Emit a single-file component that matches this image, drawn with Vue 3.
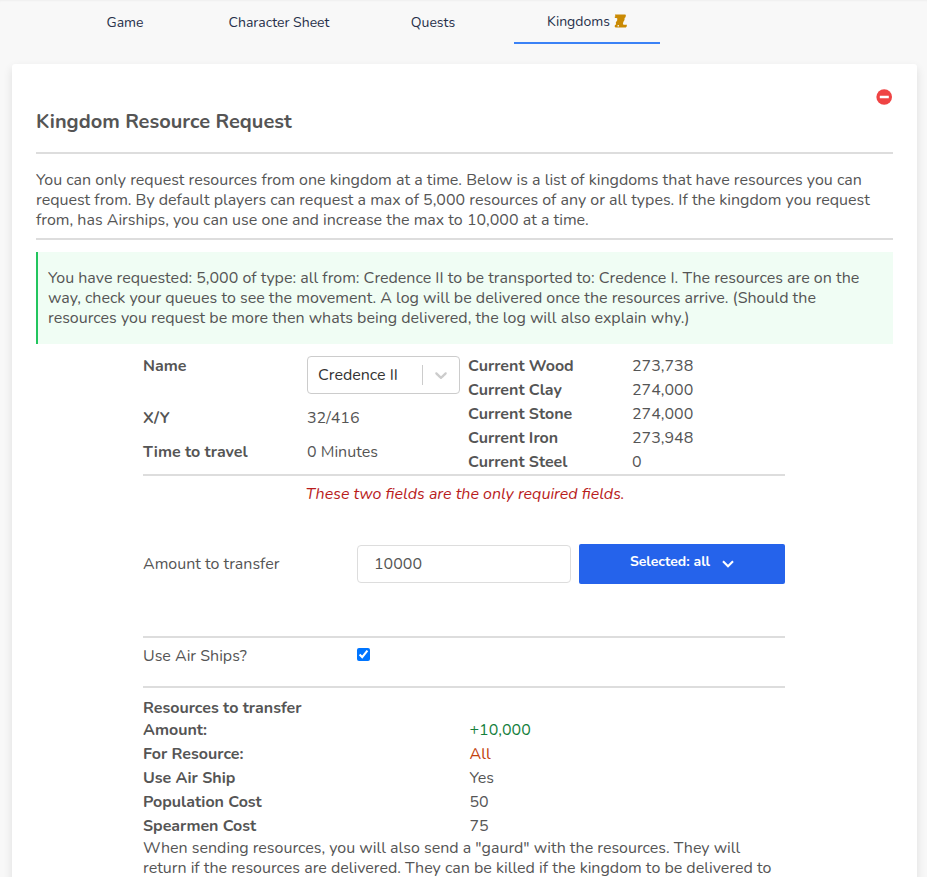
<script setup>
import { ref } from 'vue'

const tabs = [
  { name: 'Game' },
  { name: 'Character Sheet' },
  { name: 'Quests' },
  { name: 'Kingdoms', active: true },
]
const intro = [
  'You can only request resources from one kingdom at a time. Below is a list of kingdoms that have resources you can',
  'request from. By default players can request a max of 5,000 resources of any or all types. If the kingdom you request',
  'from, has Airships, you can use one and increase the max to 10,000 at a time.',
]
const notice = [
  'You have requested: 5,000 of type: all from: Credence II to be transported to: Credence I. The resources are on the',
  'way, check your queues to see the movement. A log will be delivered once the resources arrive. (Should the',
  'resources you request be more then whats being delivered, the log will also explain why.)',
]
const stock = [
  ['Current Wood', '273,738'],
  ['Current Clay', '274,000'],
  ['Current Stone', '274,000'],
  ['Current Iron', '273,948'],
  ['Current Steel', '0'],
]
const summary = [
  ['Amount:', '+10,000', 'green'],
  ['For Resource:', 'All', 'orange'],
  ['Use Air Ship', 'Yes', ''],
  ['Population Cost', '50', ''],
  ['Spearmen Cost', '75', ''],
]
const footer = [
  'When sending resources, you will also send a "gaurd" with the resources. They will',
  'return if the resources are delivered. They can be killed if the kingdom to be delivered to',
]
const amount = ref('10000')
const airship = ref(true)
</script>

<template>
  <div class="page">
    <nav class="tabs">
      <a v-for="t in tabs" :key="t.name" class="tab" :class="{ active: t.active }">
        <span>{{ t.name }}</span>
        <svg v-if="t.active" class="scroll" viewBox="0 0 13 14">
          <path d="M.9.4H11.400L11.900 1.500 11.500 3.200 10.600 4 10.500 6 9.300 8 8.900 10.100 9.600 10.800H12.900L12.700 12.600 11.800 13.600H1.600L.7 12.700.9 10.900 2.100 10.500 1.800 8.500 3.200 6.200 3.300 4.600 2.500 3.900 1.200 4 .5 3.100 1.400 2.300z" />
          <path d="M3.600 10.900v1.500h1.300v-1.500z" fill="#f8f8f8" />
        </svg>
      </a>
    </nav>

    <main class="card">
      <button class="close" aria-label="Close">
        <svg viewBox="0 0 16 16"><circle cx="8.200" cy="8" r="7.800" fill="#ef4444" /><rect x="3.800" y="6.800" width="9" height="2.500" rx=".2" fill="#fff" /></svg>
      </button>
      <h3>Kingdom Resource Request</h3>
      <hr class="rule" />
      <p class="copy intro"><span v-for="l in intro" :key="l">{{ l }}</span></p>
      <hr class="rule" />
      <div class="alert"><p class="copy"><span v-for="l in notice" :key="l">{{ l }}</span></p></div>

      <section class="body">
        <div class="details">
          <dl class="kingdom">
            <dt>Name</dt>
            <dd class="pick">
              <div class="select">
                <span class="value">Credence II</span>
                <span class="sep"></span>
                <svg viewBox="0 0 20 20"><path d="M4.516 7.548c.436-.446 1.043-.481 1.576 0L10 11.295l3.908-3.747c.533-.481 1.141-.446 1.574 0 .436.445.408 1.197 0 1.615-.406.418-4.695 4.502-4.695 4.502a1.095 1.095 0 0 1-1.576 0S4.924 9.581 4.516 9.163c-.409-.418-.436-1.170 0-1.615z" /></svg>
              </div>
            </dd>
            <dt>X/Y</dt><dd>32/416</dd>
            <dt>Time to travel</dt><dd>0 Minutes</dd>
          </dl>
          <dl class="stock">
            <template v-for="s in stock" :key="s[0]"><dt>{{ s[0] }}</dt><dd>{{ s[1] }}</dd></template>
          </dl>
        </div>
        <hr class="rule" />
        <p class="required">These two fields are the only required fields.</p>
        <div class="form">
          <label for="amount">Amount to transfer</label>
          <input id="amount" v-model="amount" class="amount" />
          <button class="menu">
            <span>Selected: all</span>
            <svg viewBox="0 0 12 8"><path d="M1 1.300 6 6.200 11 1.300" /></svg>
          </button>
        </div>
        <hr class="rule" />
        <div class="airships">
          <label for="airship">Use Air Ships?</label>
          <input id="airship" v-model="airship" type="checkbox" />
        </div>
        <hr class="rule" />
        <h4>Resources to transfer</h4>
        <dl class="summary">
          <template v-for="s in summary" :key="s[0]"><dt>{{ s[0] }}</dt><dd :class="s[2]">{{ s[1] }}</dd></template>
        </dl>
        <p class="copy foot"><span v-for="l in footer" :key="l">{{ l }}</span></p>
      </section>
    </main>
  </div>
</template>

<style>
body { margin: 0; background: #f8f8f8; overflow: hidden; }
</style>

<style scoped>
* { box-sizing: border-box; }
.page {
  height: 877px;
  overflow: hidden;
  padding: 0 10px 0 12px;
  background: #f8f8f8;
  box-shadow: inset 0 2px 2px -1px rgba(0, 0, 0, .04);
  color: #555;
  font: 16px/20px Nunito, Lato, sans-serif;
}
p, dl, dd, h3, h4 { margin: 0; }
.tabs { display: flex; gap: 8px; height: 64px; padding-left: 40px; }
.tab {
  display: flex; align-items: center; justify-content: center; gap: 4px;
  width: 146px; height: 44px; padding-top: 1px; color: #27304a;
  font-size: 14px; white-space: nowrap;
}
.active { border-bottom: 2px solid #3b82f6; }
.scroll { width: 13px; height: 14px; margin-top: -2px; fill: #ca8a04; }
.card {
  height: 900px; padding: 24px; background: #fff; border-radius: 3px;
  display: flex; flex-direction: column;
  box-shadow: 0 4px 10px rgba(0, 0, 0, .11);
}
.close { align-self: flex-end; width: 16px; height: 16px; margin: 1px 1px 0 0; padding: 0; border: 0; background: none; }
.close svg { display: block; width: 16px; height: 16px; }
h3 { margin: 5px 0 18px; font-size: 20px; line-height: 24px; font-weight: 700; }
.rule { width: 100%; height: 2px; margin: 0; border: 0; background: #ddd; flex: none; }
.copy span { display: block; white-space: nowrap; }
.intro { padding: 16px 0 8px; }
.alert { margin-top: 12px; height: 92px; padding: 16px 10px; border-left: 2px solid #22c55e; background: #f0fdf4; }
.body { width: 642px; margin: 10px 0 0 107px; }
.details { display: grid; grid-template-columns: 317px 317px; gap: 8px; height: 120px; }
dt, h4 { font-weight: 700; }
dl { display: grid; grid-template-columns: 1fr 1fr; column-gap: 11px; }
.kingdom { grid-template-rows: 52px 34px 34px; line-height: 24px; }
.pick { padding-top: 2px; }
.select { display: flex; align-items: center; height: 38px; border: 1px solid #ccc; border-radius: 4px; padding: 0 8px 0 10px; color: #333; }
.value { flex: 1; white-space: nowrap; }
.sep { width: 1px; height: 20px; margin-right: 8px; background: #ccc; }
.select svg { width: 20px; height: 20px; fill: #ccc; }
.stock, .summary { grid-auto-rows: 24px; line-height: 24px; }
.required { padding: 8px 0 0 2px; text-align: center; font-style: italic; color: #b91c1c; }
.form { display: grid; grid-template-columns: 206px 214px 206px; gap: 8px; align-items: center; height: 40px; margin: 40px 0 52px; }
.amount {
  width: 214px; height: 38px; padding: 0 16px; border: 1px solid #ddd; border-radius: 4px;
  font: inherit; color: inherit; background: #fff;
}
.menu {
  display: flex; justify-content: center; align-items: center; gap: 12px; height: 40px; padding: 0 0 4px; border: 0;
  border-radius: 2px; background: #2563eb; color: #fff; font: 700 14px/20px Nunito, Lato, sans-serif;
}
.menu svg { width: 12px; height: 8px; margin-top: 3px; fill: none; stroke: #fff; stroke-width: 2.100; overflow: visible; }
.airships { display: grid; grid-template-columns: 206px 214px; gap: 8px; height: 48px; padding-top: 8px; }
.airships input { width: 13px; height: 13px; margin: 2px 0 0; accent-color: #0075ff; }
h4 { padding-top: 10px; font-size: 16px; line-height: 20px; }
.green { color: #15803d; }
.orange { color: #c2410c; }
</style>
